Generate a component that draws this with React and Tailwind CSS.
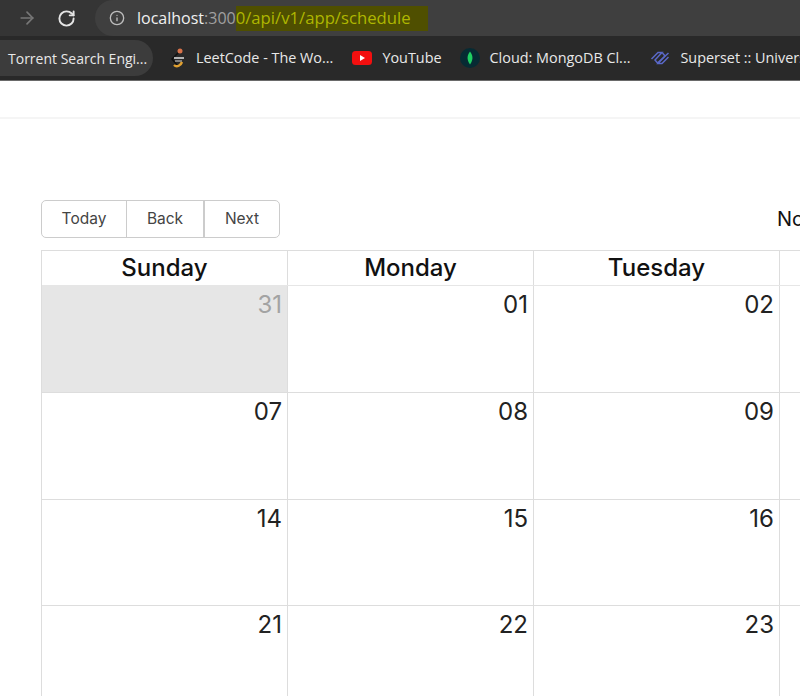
import React from 'react';
import { ArrowRight, RotateCw, Info } from 'lucide-react';

const days = ['Sunday', 'Monday', 'Tuesday', 'Wednesday'];

const weeks = [
  { height: 'h-[107px]', dates: ['31', '01', '02', '03'] },
  { height: 'h-[107px]', dates: ['07', '08', '09', '10'] },
  { height: 'h-[106px]', dates: ['14', '15', '16', '17'] },
  { height: 'h-[106px]', dates: ['21', '22', '23', '24'] },
];

function LeetCodeIcon() {
  return (
    <svg width="18" height="24" viewBox="0 0 18 24" fill="none">
      <circle cx="11" cy="5" r="2.5" fill="#d9734a" />
      <path d="M9 7 L3 13 L8 19" stroke="#111111" strokeWidth="1.5" />
      <path d="M5 12 H15" stroke="#d8d8d8" strokeWidth="1.6" />
      <path d="M6 15 H13" stroke="#d8d8d8" strokeWidth="1" />
      <path d="M5 19 C8 22 12 19 13 16" stroke="#e0a030" strokeWidth="2.4" />
    </svg>
  );
}

function YouTubeIcon() {
  return (
    <svg width="20" height="14" viewBox="0 0 20 14">
      <rect width="20" height="14" rx="3.5" fill="#f40f0f" />
      <path d="M8 4 L13 7 L8 10 Z" fill="#fff" />
    </svg>
  );
}

function MongoIcon() {
  return (
    <svg width="20" height="20" viewBox="0 0 20 20">
      <circle cx="10" cy="10" r="10" fill="#062b33" />
      <path d="M10 3.5 C13 7 13.5 12 10 16.5 C6.5 12 7 7 10 3.5 Z" fill="#1fcf62" />
    </svg>
  );
}

function SupersetIcon() {
  return (
    <svg width="20" height="16" viewBox="0 0 20 16" fill="none" stroke="#5a68c8" strokeWidth="1.5">
      <path d="M1.5 9 L8 2.5 H12 L5 10 L7.5 13 L18.5 3" />
      <path d="M18.5 7 L12 13.5 H8 L15 6 L12.5 3" />
    </svg>
  );
}

function BrowserBar() {
  return (
    <div className="flex flex-col border-b border-[#6a6a6a] font-['Open_Sans',sans-serif]">
      <div className="h-[36px] bg-[#353535] flex items-center pl-[17px]">
        <ArrowRight className="w-5 h-5 text-[#777777]" strokeWidth={2} />
        <RotateCw className="w-[19px] h-[19px] text-[#e4e4e4] ml-[20px]" strokeWidth={2.4} />
        <div className="ml-[19px] flex-1 h-[36px] bg-[#3f3f3f] rounded-l-[18px] flex items-center pl-[14px]">
          <Info className="w-4 h-4 text-[#bdbdbd]" strokeWidth={2} />
          <div className="ml-[12px] text-[16px] flex items-center text-[#f0f0f0] whitespace-nowrap">
            <span>localhost</span>
            <span className="text-[#a0a0a0]">:300</span>
            <span className="bg-[#4f4f00] text-[#aeb600] text-[16.7px] h-[25px] flex items-center pr-[17px]">0/api/v1/app/schedule</span>
          </div>
        </div>
      </div>
      <div className="h-[44px] bg-[#292929] flex items-center text-[14.4px] text-[#e8e8e8] whitespace-nowrap overflow-hidden">
        <div className="h-[36px] w-[153px] shrink-0 bg-[#3c3c3c] rounded-r-[18px] flex items-center pl-[8px] text-[14px]">Torrent Search Engi...</div>
        <div className="ml-[16px] flex items-center gap-[9px] shrink-0"><LeetCodeIcon />LeetCode - The Wo...</div>
        <div className="ml-[19px] flex items-center gap-[10px] shrink-0"><YouTubeIcon />YouTube</div>
        <div className="ml-[18px] flex items-center gap-[10px] shrink-0"><MongoIcon />Cloud: MongoDB Cl...</div>
        <div className="ml-[20px] flex items-center gap-[10px] shrink-0"><SupersetIcon />Superset :: Universal</div>
      </div>
    </div>
  );
}

function Toolbar() {
  return (
    <div className="flex items-center whitespace-nowrap">
      <div className="flex h-[38px] w-[239px] shrink-0 border border-[#cccccc] rounded-[5px] text-[15.5px] text-[#444444]">
        <div className="w-[85px] flex items-center justify-center border-r border-[#cccccc]">Today</div>
        <div className="w-[78px] flex items-center justify-center border-r-2 border-[#cccccc]">Back</div>
        <div className="flex-1 flex items-center justify-center">Next</div>
      </div>
      <div className="ml-[497px] shrink-0 text-[20px] text-[#111111]">November 2021</div>
    </div>
  );
}

function Calendar() {
  return (
    <div className="mt-[12px] w-[984px] border-l border-t border-[#dddddd]">
      <div className="flex h-[35px] border-b border-[#e6e6e6]">
        {days.map((day) => (
          <div key={day} className="w-[246px] shrink-0 border-r border-[#dddddd] flex items-center justify-center text-[24px] font-medium text-[#111111]">
            {day}
          </div>
        ))}
      </div>
      {weeks.map((week) => (
        <div key={week.dates[0]} className={`flex border-b border-[#dddddd] ${week.height}`}>
          {week.dates.map((date) => (
            <div
              key={date}
              className={`w-[246px] shrink-0 border-r border-[#dddddd] text-right pr-[5px] pt-[1px] text-[24px] leading-[36px] ${date === '31' ? 'bg-[#e6e6e6] text-[#a3a3a3]' : 'text-[#222222]'}`}
            >
              {date}
            </div>
          ))}
        </div>
      ))}
    </div>
  );
}

export default function App() {
  return (
    <div className="w-[800px] h-[696px] overflow-hidden bg-white font-['Inter',sans-serif]">
      <BrowserBar />
      <div className="h-[38px] border-b-2 border-[#f5f5f5]" />
      <div className="pt-[81px] pl-[41px]">
        <Toolbar />
        <Calendar />
      </div>
    </div>
  );
}
